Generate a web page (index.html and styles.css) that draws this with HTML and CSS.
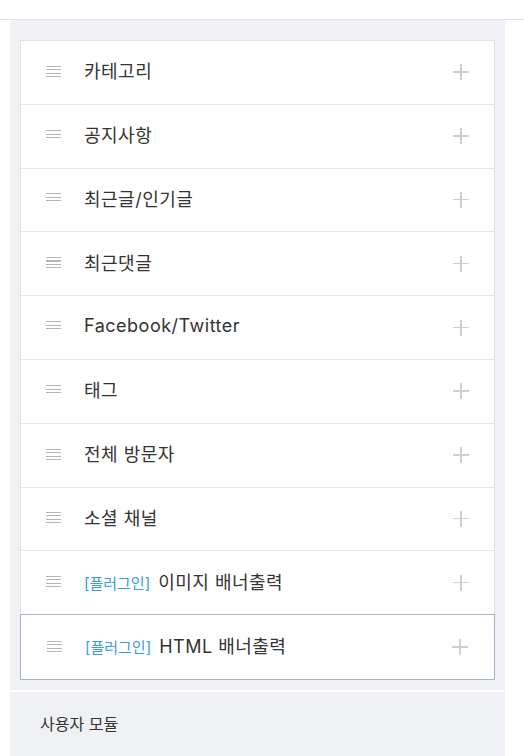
FILE: index.html
```html
<!DOCTYPE html>
<html>
<head>
    <title>모듈 관리</title>
    <link rel="stylesheet" href="styles.css">
</head>
<body>
    <div class="topbar"></div>

    <div class="panel">
        <ul class="module-list">
            <li class="module"><span class="handle"></span><span class="name">카테고리</span><span class="add"></span></li>
            <li class="module"><span class="handle"></span><span class="name">공지사항</span><span class="add"></span></li>
            <li class="module"><span class="handle"></span><span class="name">최근글/인기글</span><span class="add"></span></li>
            <li class="module"><span class="handle"></span><span class="name">최근댓글</span><span class="add"></span></li>
            <li class="module"><span class="handle"></span><span class="name">Facebook/Twitter</span><span class="add"></span></li>
            <li class="module"><span class="handle"></span><span class="name">태그</span><span class="add"></span></li>
            <li class="module"><span class="handle"></span><span class="name">전체 방문자</span><span class="add"></span></li>
            <li class="module"><span class="handle"></span><span class="name">소셜 채널</span><span class="add"></span></li>
            <li class="module"><span class="handle"></span><span class="name"><span class="tag">[플러그인]</span>이미지 배너출력</span><span class="add"></span></li>
            <li class="module active"><span class="handle"></span><span class="name"><span class="tag">[플러그인]</span>HTML 배너출력</span><span class="add"></span></li>
        </ul>
    </div>

    <div class="panel user-panel">
        <h2>사용자 모듈</h2>
    </div>
</body>
</html>
```

FILE: styles.css
```css
body {
    margin: 0;
    padding: 0;
    background: #fff;
    font-family: Inter, "Noto Sans CJK KR", sans-serif;
    color: #333;
}

.topbar {
    height: 19px;
    border-bottom: 1px solid #e2e3e7;
}

.panel {
    margin: 0 19px 0 10px;
    padding: 20px 10px 10px;
    background-color: #f0f1f5;
}

.module-list {
    list-style: none;
    margin: 0;
    padding: 0;
    background: #fff;
    border: 1px solid #dfe2e9;
}

.module {
    display: flex;
    align-items: center;
    box-sizing: border-box;
    height: 63.8px;
    padding: 0 25px;
    border-bottom: 1px solid #e3e6ec;
}

.module:last-child {
    border-bottom: none;
}

/* selected row gets its own darker frame */
.module.active {
    margin: -1px;
    padding: 0 26px;
    height: 65.8px;
    border: 1px solid #a9b1c1;
}

.handle {
    width: 15px;
    height: 11px;
    flex: none;
    margin-bottom: 2px;
    background: repeating-linear-gradient(to bottom, #b5b5b5 0, #b5b5b5 1px, transparent 1px, transparent 3.5px);
}

.name {
    flex: 1;
    margin: 0 0 4px 23px;
    font-size: 18px;
    letter-spacing: 0.5px;
    color: #333;
    white-space: nowrap;
}

.tag {
    margin-right: 8px;
    font-size: 15px;
    letter-spacing: 0;
    color: #3b9be0;
}

.add {
    position: relative;
    width: 16px;
    height: 16px;
    flex: none;
}

.add::before,
.add::after {
    content: "";
    position: absolute;
    background: #cfcfcf;
}

.add::before {
    left: 7px;
    top: 0;
    width: 1.5px;
    height: 16px;
}

.add::after {
    left: 0;
    top: 7px;
    width: 16px;
    height: 1.5px;
}

.user-panel {
    margin-top: 2px;
    padding: 20px 30px 22px;
}

.user-panel h2 {
    margin: 0;
    font-size: 16px;
    font-weight: normal;
    line-height: 24px;
    color: #333;
}
```
